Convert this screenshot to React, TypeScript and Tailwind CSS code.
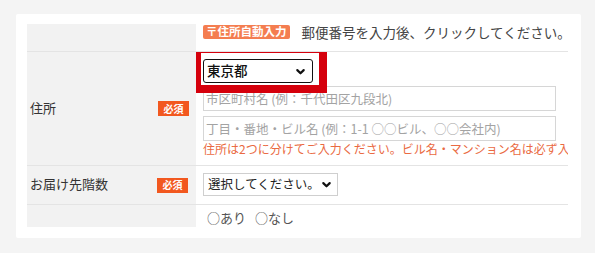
import React from "react";

const Chevron = ({ className = "" }: { className?: string }) => (
  <svg viewBox="0 0 12 12" className={className} fill="none" stroke="currentColor" strokeWidth="2.4" strokeLinecap="round" strokeLinejoin="round">
    <path d="M2.5 4.5 6 8l3.5-3.5" />
  </svg>
);

const Badge = () => (
  <span className="inline-flex items-center justify-center w-[31px] h-[15px] bg-[#f2581f] text-white text-[10px] leading-none font-bold">
    必須
  </span>
);

export default function App() {
  return (
    <div className="w-[595px] h-[253px] bg-[#f4f4f4] pt-[14px] pl-[16px] font-['Noto_Sans_CJK_JP',sans-serif] text-[#333]">
      <div className="w-[565px] h-[224px] bg-white pt-[10px] pl-[11px] overflow-hidden rounded-[2px]">
        <div className="w-[541px]">
          {/* Row 1 */}
          <div className="grid grid-cols-[169px_1fr] h-[28px] border-b border-[#e4e4e4]">
            <div className="bg-[#f2f2f2]" />
            <div className="pl-[7px] pt-[1px] flex items-start gap-[12px] whitespace-nowrap">
              <span className="inline-flex items-center h-[14px] px-[3px] bg-[#f47d50] text-white text-[11.5px] leading-none font-bold rounded-[2px]">
                〒住所自動入力
              </span>
              <span className="text-[13.5px] leading-[14px] text-[#444]">郵便番号を入力後、クリックしてください。</span>
            </div>
          </div>
          {/* Row 2 */}
          <div className="grid grid-cols-[169px_1fr] h-[114px] border-b border-[#e4e4e4]">
            <div className="bg-[#f2f2f2] flex items-center justify-between pl-[3px] pr-[7px]">
              <span className="text-[13px] text-[#333] mt-[-2px]">住所</span>
              <Badge />
            </div>
            <div className="pl-[7px] pt-[7px] flex flex-col overflow-hidden">
              <div className="relative w-[110px] h-[24px]">
                <div className="w-full h-full border-[1.5px] border-[#111] rounded-[3px] flex items-center justify-between pl-[3px] pr-[6px]">
                  <span className="text-[13.5px] leading-none text-[#111] font-medium">東京都</span>
                  <Chevron className="w-[11px] h-[11px] text-[#111]" />
                </div>
                <div className="absolute left-[-10px] top-[-14px] w-[134px] h-[48px] border-[8px] border-[#d5000c]" />
              </div>
              <input
                className="mt-[3px] w-[353px] h-[25px] border border-[#d6d6d6] pl-[2px] text-[12.5px] outline-none placeholder:text-[#a3a3a3]"
                placeholder="市区町村名 (例：千代田区九段北)"
              />
              <input
                className="mt-[5px] w-[353px] h-[25px] border border-[#d6d6d6] pl-[2px] text-[12.5px] outline-none placeholder:text-[#a3a3a3]"
                placeholder="丁目・番地・ビル名 (例：1-1 ○○ビル、○○会社内)"
              />
              <div className="mt-[1px] text-[12px] leading-[14px] text-[#ea6a42] whitespace-nowrap">
                住所は2つに分けてご入力ください。ビル名・マンション名は必ず入力
              </div>
            </div>
          </div>
          {/* Row 3 */}
          <div className="grid grid-cols-[169px_1fr] h-[39px] border-b border-[#e4e4e4]">
            <div className="bg-[#f2f2f2] flex items-center justify-between pl-[3px] pr-[8px]">
              <span className="text-[13px] text-[#333] mt-[-2px]">お届け先階数</span>
              <Badge />
            </div>
            <div className="pl-[7px] pt-[7px]">
              <div className="w-[135px] h-[23px] border border-[#cfcfcf] flex items-center justify-between pl-[4px] pr-[5px]">
                <span className="text-[12.5px] leading-none text-[#222]">選択してください。</span>
                <Chevron className="w-[11px] h-[11px] text-[#111]" />
              </div>
            </div>
          </div>
          {/* Row 4 */}
          <div className="grid grid-cols-[169px_1fr] h-[22px]">
            <div className="bg-[#f2f2f2]" />
            <div className="pl-[11px] pt-[5px] flex gap-[9px] text-[13px] leading-[16px] text-[#555] whitespace-nowrap">
              <span>○あり</span>
              <span>○なし</span>
            </div>
          </div>
        </div>
      </div>
    </div>
  );
}
